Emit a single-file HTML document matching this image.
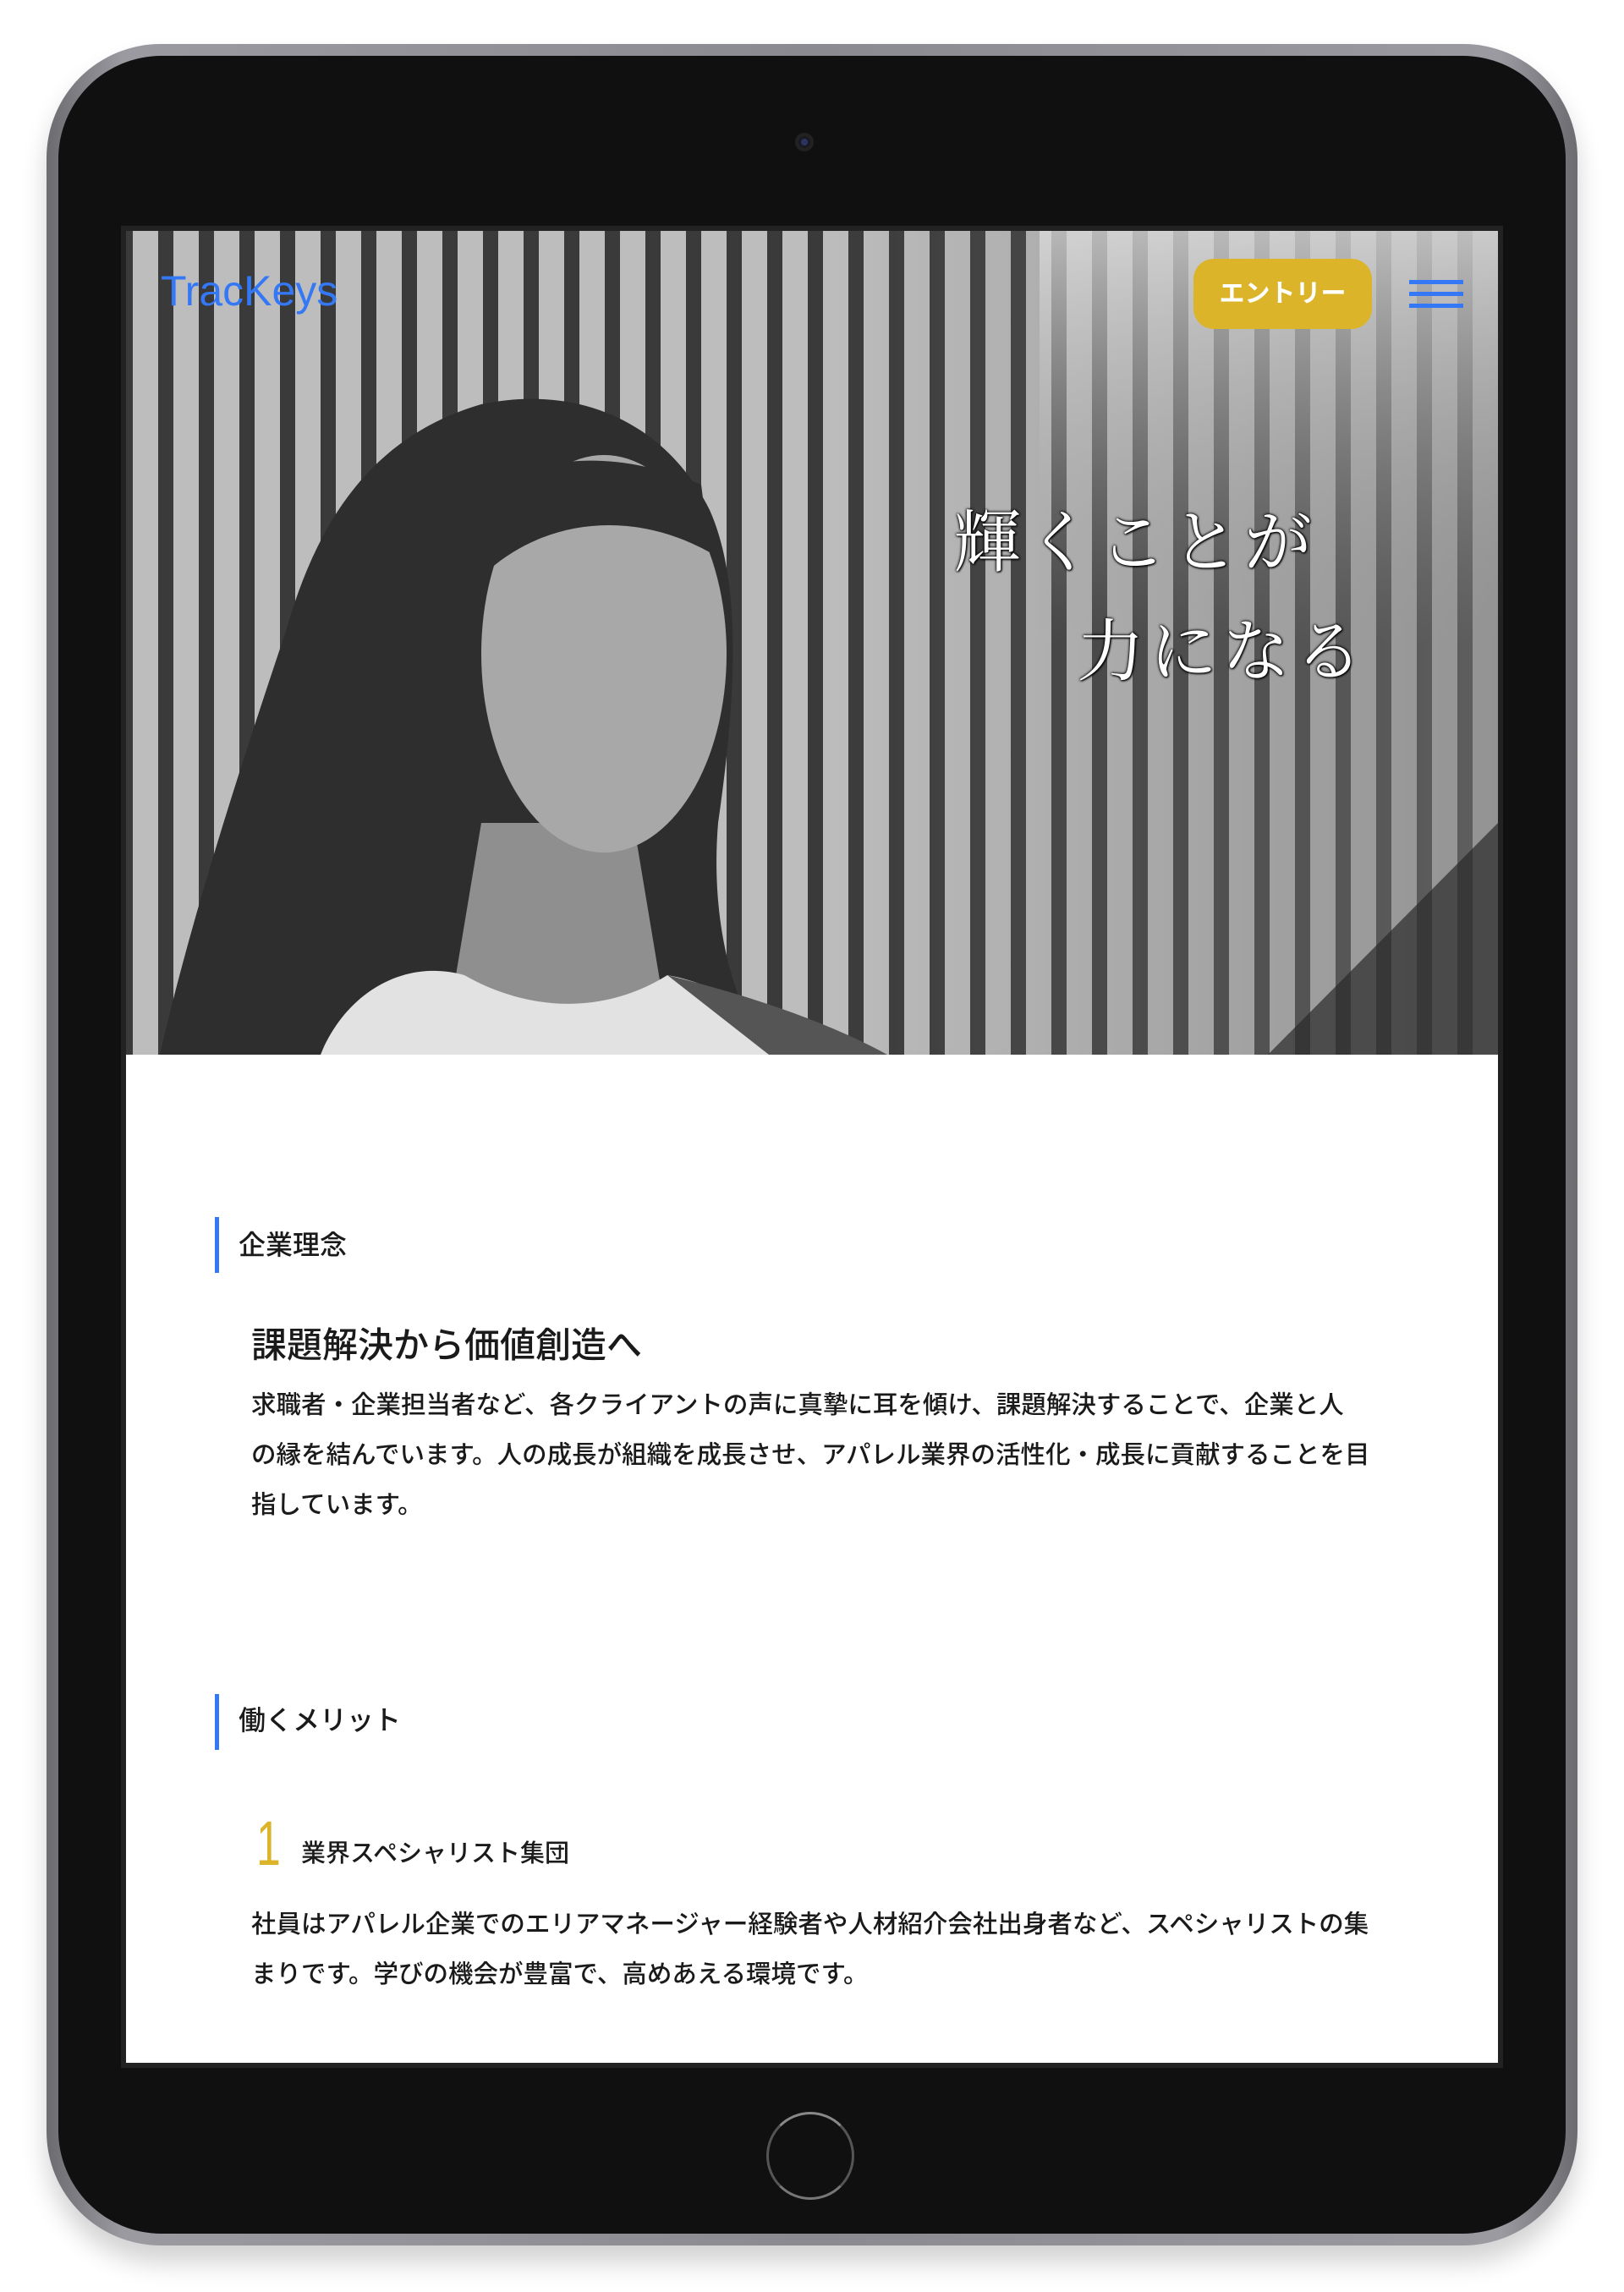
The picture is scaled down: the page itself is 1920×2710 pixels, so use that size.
<!DOCTYPE html>
<html><head><meta charset="utf-8"><style>
html,body{margin:0;padding:0;background:#fff;}
body{width:1920px;height:2710px;position:relative;overflow:hidden;font-family:"Liberation Sans","Noto Sans CJK JP",sans-serif;}
.abs{position:absolute;}
.frame{left:55px;top:52px;width:1810px;height:2603px;border-radius:135px;background:linear-gradient(90deg,#6b6b70,#9a9aa0 5%,#8a8a90 50%,#9a9aa0 95%,#6b6b70);box-shadow:0 20px 30px rgba(0,0,0,.18);}
.inner{left:69px;top:66px;width:1782px;height:2575px;border-radius:122px;background:#101010;}
.screen{left:143px;top:267px;width:1634px;height:2178px;background:#222;}
.content{left:149px;top:273px;width:1622px;height:2166px;background:#fff;overflow:hidden;}
.hero{left:0;top:0;width:1622px;height:974px;overflow:hidden;background:#888;}
.jp{font-family:"Liberation Sans","Noto Sans CJK JP",sans-serif;color:#1a1a1a;white-space:nowrap;}
.ht{font-size:80px;line-height:100px;color:#fff;letter-spacing:6px;font-family:'Liberation Serif','Noto Serif CJK SC',serif;text-shadow:0 0 3px #000,0 0 3px #000,1px 1px 2px #000;white-space:nowrap;}
</style></head><body>
<div class="abs frame"></div>
<div class="abs inner"></div>
<div class="abs" style="left:940px;top:157px;width:22px;height:22px;border-radius:50%;background:#1a1a22;box-shadow:inset 0 0 0 4px #222;"><div style="position:absolute;left:7px;top:7px;width:8px;height:8px;border-radius:50%;background:#2a3560"></div></div>
<div class="abs" style="left:906px;top:2497px;width:104px;height:104px;border-radius:50%;border:3px solid #555;box-sizing:border-box;border-top-color:#888;border-bottom-color:#777;"></div>
<div class="abs screen"></div>
<div class="abs content">
  <div class="abs hero">
    <svg width="1622" height="974" viewBox="0 0 1622 974">
      <defs>
        <pattern id="st" width="48" height="974" patternUnits="userSpaceOnUse">
          <rect width="48" height="974" fill="#3a3a3a"/>
          <rect x="8" width="30" height="974" fill="#bdbdbd"/>
        </pattern>
        <linearGradient id="fade" x1="0" x2="1">
          <stop offset="0.5" stop-color="#777" stop-opacity="0"/>
          <stop offset="1" stop-color="#777" stop-opacity="0.6"/>
        </linearGradient>
        <linearGradient id="topr" x1="0" y1="0" x2="0" y2="1">
          <stop offset="0" stop-color="#ddd" stop-opacity="0.75"/>
          <stop offset="0.5" stop-color="#999" stop-opacity="0"/>
        </linearGradient>
      </defs>
      <rect width="1622" height="974" fill="url(#st)"/>
      <rect width="1622" height="974" fill="url(#fade)"/>
      <rect x="1080" width="542" height="974" fill="url(#topr)"/>
      <polygon points="1350,974 1622,700 1622,974" fill="#2a2a2a" opacity="0.7"/>
      <path d="M40,974 C80,800 140,620 190,470 C230,330 300,240 420,205 C540,180 640,230 690,330 C730,420 720,560 700,700 C690,820 720,920 760,974 Z" fill="#2e2e2e"/>
      <path d="M420,700 L600,700 L640,940 L380,940 Z" fill="#8f8f8f"/>
      <ellipse cx="565" cy="500" rx="145" ry="235" fill="#a8a8a8"/>
      <path d="M400,330 C460,270 560,250 680,300 L690,380 C600,330 500,340 430,400 Z" fill="#2e2e2e"/>
      <path d="M230,974 C260,900 330,860 400,880 C470,920 560,930 640,880 C700,890 760,930 800,974 Z" fill="#e2e2e2"/>
      <path d="M640,880 C720,900 820,930 900,974 L760,974 Z" fill="#555"/>
    </svg>
    <div class="abs" style="left:41px;top:42px;font-size:50px;color:#3478f6;font-family:'Liberation Sans',sans-serif;">TracKeys</div>
    <div class="abs" style="left:1262px;top:33px;width:211px;height:83px;border-radius:24px;background:#dbb42a;color:#fff;font-weight:bold;font-size:30px;line-height:83px;text-align:center;font-family:'Liberation Sans','Noto Sans CJK JP',sans-serif;">エントリー</div>
    <div class="abs" style="left:1517px;top:58px;width:64px;height:5px;background:#3478f6"></div>
    <div class="abs" style="left:1517px;top:72px;width:64px;height:5px;background:#3478f6"></div>
    <div class="abs" style="left:1517px;top:86px;width:64px;height:5px;background:#3478f6"></div>
    <div class="abs ht" style="left:978px;top:320px;">輝くことが</div>
    <div class="abs ht" style="left:1124px;top:449px;">力になる</div>
  </div>
  <div class="abs" style="left:105px;top:1166px;width:5px;height:66px;background:#3478f6"></div>
  <div class="abs jp" style="left:133px;top:1179px;font-size:32px;line-height:40px;font-weight:500;">企業理念</div>
  <div class="abs jp" style="left:148px;top:1293px;font-size:42px;line-height:50px;font-weight:500;">課題解決から価値創造へ</div>
  <div class="abs jp" style="left:148px;top:1359px;font-size:29.5px;line-height:59px;font-weight:500;white-space:normal;width:1340px;">求職者・企業担当者など、各クライアントの声に真摯に耳を傾け、課題解決することで、企業と人<br>の縁を結んでいます。人の成長が組織を成長させ、アパレル業界の活性化・成長に貢献することを目<br>指しています。</div>
  <div class="abs" style="left:105px;top:1730px;width:5px;height:66px;background:#3478f6"></div>
  <div class="abs jp" style="left:133px;top:1741px;font-size:32px;line-height:40px;font-weight:500;">働くメリット</div>
  <div class="abs" style="left:154px;top:1870px;font-size:74px;line-height:74px;color:#dbb42a;font-family:'Liberation Sans',sans-serif;transform:scaleX(0.7);transform-origin:left;">1</div>
  <div class="abs jp" style="left:207px;top:1901px;font-size:29px;line-height:36px;font-weight:500;">業界スペシャリスト集団</div>
  <div class="abs jp" style="left:148px;top:1973px;font-size:29.5px;line-height:59px;font-weight:500;">社員はアパレル企業でのエリアマネージャー経験者や人材紹介会社出身者など、スペシャリストの集<br>まりです。学びの機会が豊富で、高めあえる環境です。</div>
</div>
</body></html>
